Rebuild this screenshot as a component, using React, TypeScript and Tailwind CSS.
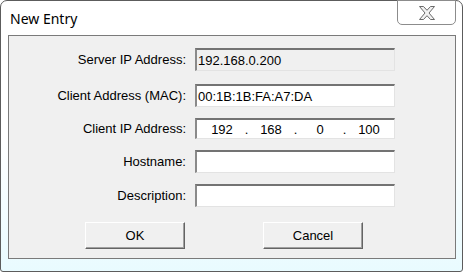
import React from 'react';

const font = { fontFamily: '"Liberation Sans", Arial, sans-serif' };

const Field: React.FC<{ value?: string; disabled?: boolean; h?: string }> = ({ value, disabled, h = 'h-[23px]' }) => (
  <div
    className={`${h} w-[200px] border-t-2 border-l-2 border-b border-r border-t-[#737373] border-l-[#8a8a8a] border-b-[#e3e3e3] border-r-[#e3e3e3] ${disabled ? 'bg-[#f0f0f0]' : 'bg-white'} flex items-center pl-[1px] text-[13px] text-black leading-none`}
  >
    {value}
  </div>
);

const Row: React.FC<{ label: string; className?: string; children: React.ReactNode }> = ({ label, className = '', children }) => (
  <div className={`flex items-center ${className}`}>
    <div className="w-[178px] text-right text-[13px] text-black pr-[1px]">{label}</div>
    <div className="ml-[8px]">{children}</div>
  </div>
);

const IpField: React.FC<{ parts: string[] }> = ({ parts }) => (
  <div className="h-[21px] w-[200px] border-t-2 border-l-2 border-b border-r border-t-[#737373] border-l-[#8a8a8a] border-b-[#e3e3e3] border-r-[#e3e3e3] bg-white flex items-center pl-[6px] text-[13px] text-black leading-none">
    {parts.map((p, i) => (
      <React.Fragment key={i}>
        <span className="w-[38px] text-center">{p}</span>
        {i < parts.length - 1 && <span className="w-[11px] text-center">.</span>}
      </React.Fragment>
    ))}
  </div>
);

const Button: React.FC<{ label: string }> = ({ label }) => (
  <button className="h-[27px] w-[100px] bg-[#f0f0f0] border border-t-white border-l-white border-b-[#646464] border-r-[#646464] shadow-[inset_-1px_-1px_0_#a0a0a0] text-[13px] text-black">
    {label}
  </button>
);

export default function App() {
  return (
    <div className="w-[464px] h-[273px] bg-white" style={font}>
      <div className="w-[463px] h-[272px] border border-[#5c5c5c] rounded-t-[7px] rounded-b-[3px] bg-gradient-to-b from-white via-white to-[#e9fbff] flex flex-col">
        <div className="h-[34px] flex items-start justify-between">
          <div className="pl-[9px] pt-[7px] text-[14px] text-black" style={{ fontFamily: '"Noto Sans", "Open Sans", sans-serif' }}>
            New Entry
          </div>
          <div className="mr-[6px] mt-[-1px] h-[25px] w-[59px] border border-[#8c8c8c] rounded-b-[5px] bg-white flex items-center justify-center">
            <svg width="18" height="16" viewBox="0 0 18 16">
              <path
                d="M1.5 1.5h4l3.5 3.8 3.5-3.8h4l-5.5 6.5 5.5 6.5h-4l-3.5-3.8-3.5 3.8h-4l5.5-6.5z"
                fill="#f2f2f2"
                stroke="#6a6a6a"
                strokeWidth="1"
                strokeLinejoin="round"
              />
            </svg>
          </div>
        </div>
        <div className="ml-[7px] mr-[6px] h-[224px] border border-[#7a7a7a] bg-[#f0f0f0] flex flex-col">
          <Row label="Server IP Address:" className="mt-[12px]">
            <Field value="192.168.0.200" disabled />
          </Row>
          <Row label="Client Address (MAC):" className="mt-[13px]">
            <Field value="00:1B:1B:FA:A7:DA" />
          </Row>
          <Row label="Client IP Address:" className="mt-[11px]">
            <IpField parts={['192', '168', '0', '100']} />
          </Row>
          <Row label="Hostname:" className="mt-[11px]">
            <Field />
          </Row>
          <Row label="Description:" className="mt-[11px]">
            <Field />
          </Row>
          <div className="mt-[15px] flex">
            <div className="ml-[76px]">
              <Button label="OK" />
            </div>
            <div className="ml-[78px]">
              <Button label="Cancel" />
            </div>
          </div>
        </div>
      </div>
    </div>
  );
}
